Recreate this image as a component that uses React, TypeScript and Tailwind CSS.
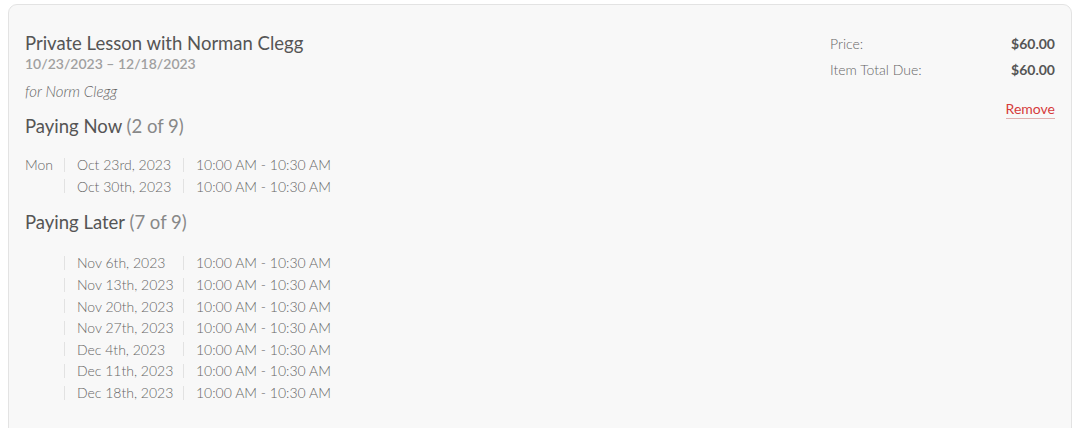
import React from 'react';

const payingNow = [
  { day: 'Mon', date: 'Oct 23rd, 2023', time: '10:00 AM - 10:30 AM' },
  { day: '', date: 'Oct 30th, 2023', time: '10:00 AM - 10:30 AM' },
];

const payingLater = [
  'Nov 6th, 2023',
  'Nov 13th, 2023',
  'Nov 20th, 2023',
  'Nov 27th, 2023',
  'Dec 4th, 2023',
  'Dec 11th, 2023',
  'Dec 18th, 2023',
].map((date) => ({ day: '', date, time: '10:00 AM - 10:30 AM' }));

const Row = ({ day, date, time }: { day: string; date: string; time: string }) => (
  <div className="flex items-center h-[21.6px] text-[14px] text-[#666] font-light">
    <span className="w-[39px]">{day}</span>
    <span className="w-px h-[14px] bg-[#e2e2e2]" />
    <span className="w-[118px] pl-[12px]">{date}</span>
    <span className="w-px h-[14px] bg-[#e2e2e2]" />
    <span className="pl-[12px]">{time}</span>
  </div>
);

const App = () => {
  return (
    <div className="bg-white h-[428px] overflow-hidden pt-[4px] pl-[8px] pr-[4px]" style={{ fontFamily: 'Lato, "Open Sans", sans-serif' }}>
      <div className="bg-[#f8f8f8] border border-[#e3e3e3] rounded-[9px] h-[460px] pl-[16px] pr-[16px] pt-[26px] flex justify-between">
        <div>
          <h2 className="text-[18.5px] leading-[24px] text-[#555]">Private Lesson with Norman Clegg</h2>
          <div className="text-[14px] leading-[18px] font-semibold text-[#a0a0a0]">10/23/2023 – 12/18/2023</div>
          <div className="mt-[9px] text-[15px] leading-[18px] italic font-light text-[#666]">for Norm Clegg</div>
          <h3 className="mt-[14px] text-[18.5px] leading-[24px] text-[#555]">
            Paying Now <span className="text-[#888]">(2 of 9)</span>
          </h3>
          <div className="mt-[16px]">
            {payingNow.map((r) => (
              <Row key={r.date} {...r} />
            ))}
          </div>
          <h3 className="mt-[13px] text-[18.5px] leading-[24px] text-[#555]">
            Paying Later <span className="text-[#888]">(7 of 9)</span>
          </h3>
          <div className="mt-[18px]">
            {payingLater.map((r) => (
              <Row key={r.date} {...r} />
            ))}
          </div>
        </div>
        <div className="w-[225px] text-[14px]">
          <div className="flex justify-between leading-[26px]">
            <span className="text-[#666] font-light">Price:</span>
            <span className="font-bold text-[#555]">$60.00</span>
          </div>
          <div className="flex justify-between leading-[26px]">
            <span className="text-[#666] font-light">Item Total Due:</span>
            <span className="font-bold text-[#555]">$60.00</span>
          </div>
          <div className="mt-[17px] flex justify-end">
            <a href="#" className="text-[#d63b3b] leading-[18px] border-b border-[#e0b0b0]">Remove</a>
          </div>
        </div>
      </div>
    </div>
  );
};

export default App;
